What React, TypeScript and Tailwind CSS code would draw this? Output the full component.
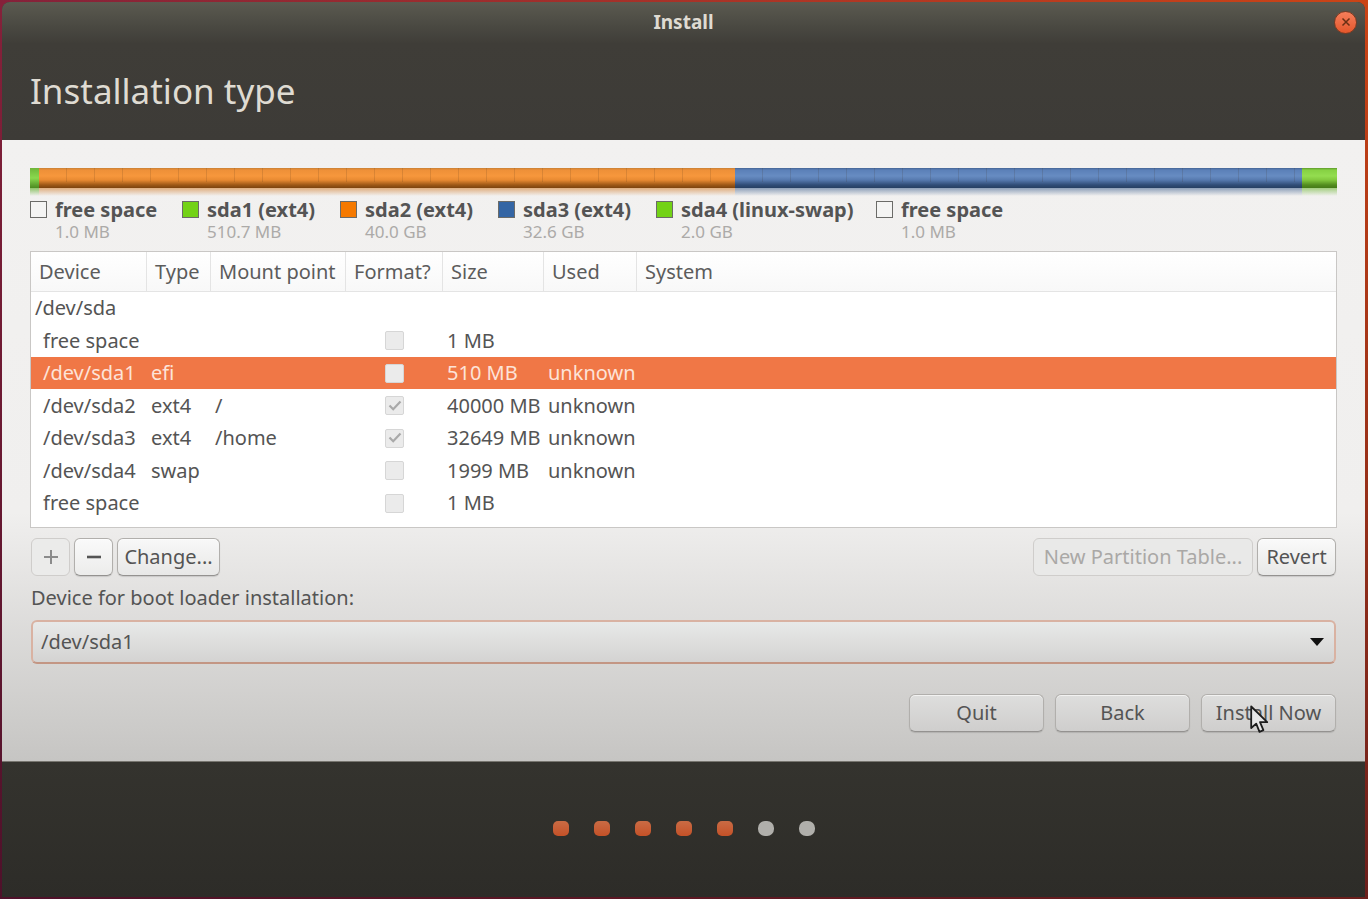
import React from "react";

type Row = {
  device: string;
  nested: boolean;
  type?: string;
  mount?: string;
  format?: boolean;
  size?: string;
  used?: string;
  selected?: boolean;
};

const rows: Row[] = [
  { device: "/dev/sda", nested: false },
  { device: "free space", nested: true, format: false, size: "1 MB" },
  { device: "/dev/sda1", nested: true, type: "efi", format: false, size: "510 MB", used: "unknown", selected: true },
  { device: "/dev/sda2", nested: true, type: "ext4", mount: "/", format: true, size: "40000 MB", used: "unknown" },
  { device: "/dev/sda3", nested: true, type: "ext4", mount: "/home", format: true, size: "32649 MB", used: "unknown" },
  { device: "/dev/sda4", nested: true, type: "swap", format: false, size: "1999 MB", used: "unknown" },
  { device: "free space", nested: true, format: false, size: "1 MB" },
];

const legend = [
  { name: "free space", size: "1.0 MB", swatch: "bg-[#f4f4f3]" },
  { name: "sda1 (ext4)", size: "510.7 MB", swatch: "bg-[#73d216]" },
  { name: "sda2 (ext4)", size: "40.0 GB", swatch: "bg-[#f57900]" },
  { name: "sda3 (ext4)", size: "32.6 GB", swatch: "bg-[#3465a4]" },
  { name: "sda4 (linux-swap)", size: "2.0 GB", swatch: "bg-[#73d216]" },
  { name: "free space", size: "1.0 MB", swatch: "bg-[#f4f4f3]" },
];

const segments = [
  {
    grow: 9,
    fill: "bg-linear-to-b from-[#6fb63a] via-[#8ad94e] to-[#4c8a20]",
    glow: "from-[#8fc36a]",
    ticks: false,
  },
  {
    grow: 696,
    fill: "bg-[linear-gradient(to_bottom,#c88136_0,#ee9038_2px,#f7973c_8px,#e88a32_12px,#9c5716_17px,#7c430e_100%)]",
    glow: "from-[#dfae80]",
    ticks: true,
  },
  {
    grow: 567,
    fill: "bg-[linear-gradient(to_bottom,#456594_0,#5b80b8_2px,#678cc2_8px,#5679ae_12px,#304c76_17px,#263f62_100%)]",
    glow: "from-[#8d9fb8]",
    ticks: true,
  },
  {
    grow: 35,
    fill: "bg-[linear-gradient(to_bottom,#5f9a2b_0,#86d143_2px,#94dd50_8px,#82c83e_12px,#528c1e_17px,#457a18_100%)]",
    glow: "from-[#a3cd80]",
    ticks: false,
  },
];

const raised =
  "rounded-md border border-[#b1afac] border-b-[#949290] bg-linear-to-b shadow-[inset_0_1px_0_rgba(255,255,255,0.6),0_1px_1px_rgba(0,0,0,0.12)]";

function UsageBar() {
  return (
    <div className="flex" role="img" aria-label="Disk usage">
      {segments.map((s, i) => (
        <div key={i} className="basis-0" style={{ flexGrow: s.grow }}>
          <div className={`h-5 ${s.fill}`}>
            {s.ticks && (
              <div className="h-3.5 bg-[repeating-linear-gradient(to_right,transparent_0,transparent_27px,rgba(60,40,20,0.14)_27px,rgba(60,40,20,0.14)_28px)]" />
            )}
          </div>
          <div className={`h-2 bg-linear-to-b to-transparent ${s.glow}`} />
        </div>
      ))}
    </div>
  );
}

function PartitionTable() {
  const head = "border-r border-[#e4e4e4] px-2 font-normal text-left";
  return (
    <div className="h-[277px] border border-[#c9c7c5] bg-white">
      <table className="w-full table-fixed border-separate border-spacing-0 whitespace-nowrap">
        <colgroup>
          <col className="w-[116px]" />
          <col className="w-16" />
          <col className="w-[135px]" />
          <col className="w-[97px]" />
          <col className="w-[101px]" />
          <col className="w-[93px]" />
          <col />
        </colgroup>
        <thead>
          <tr className="h-10 bg-linear-to-b from-white to-[#f8f8f8] text-[#5c5c5c] *:border-b">
            <th className={head}>Device</th>
            <th className={head}>Type</th>
            <th className={head}>Mount point</th>
            <th className={head}>Format?</th>
            <th className={head}>Size</th>
            <th className={head}>Used</th>
            <th className="border-[#e4e4e4] px-2 text-left font-normal">System</th>
          </tr>
        </thead>
        <tbody>
          {rows.map((r, i) => (
            <tr key={i} className={`h-8 even:h-[33px] ${r.selected ? "bg-[#f07746] text-[#fde3d8]" : ""}`}>
              <td className={r.nested ? "pl-3" : "pl-1"}>{r.device}</td>
              <td className="pl-1">{r.type}</td>
              <td className="pl-1">{r.mount}</td>
              <td>
                {r.format !== undefined && (
                  <span className="grid place-items-center">
                    <input
                      type="checkbox"
                      disabled
                      checked={r.format}
                      readOnly
                      aria-label={`Format ${r.device}`}
                      className="col-start-1 row-start-1 size-[19px] appearance-none rounded-xs border border-[#d6d6d6] bg-[#ebebeb]"
                    />
                    {r.format && (
                      <svg viewBox="0 0 14 12" className="col-start-1 row-start-1 h-3 w-3.5" aria-hidden="true">
                        <path d="M1.5 5.5 5.2 9.2 12.5 1.5" fill="none" stroke="#a9a9a9" strokeWidth="2.2" />
                      </svg>
                    )}
                  </span>
                )}
              </td>
              <td className="pl-1">{r.size}</td>
              <td className="pl-1">{r.used}</td>
              <td />
            </tr>
          ))}
        </tbody>
      </table>
    </div>
  );
}

export default function App() {
  const action = `${raised} relative h-[38px] w-[135px] from-[#dededd] to-[#cfcecd]`;
  return (
    <div className="flex min-h-screen bg-[linear-gradient(to_bottom,transparent,#2b062099),linear-gradient(to_right,#85213a,#cb4416)] py-0.5 pr-[3px] pl-0.5 font-['Noto_Sans','Open_Sans',sans-serif] text-[20px] leading-6 text-[#545454]">
      <div className="flex flex-1 flex-col overflow-hidden rounded-t-lg bg-[#3d3b37]">
        <header className="bg-[linear-gradient(to_bottom,#5b5a50_0,#4a4942_24px,#3f3d38_42px,#3d3b37_100%)] text-[#dfdbd2]">
          <div className="relative flex h-10 items-center justify-center text-[19px] font-bold">
            <span>Install</span>
            <button
              type="button"
              aria-label="Close"
              className="absolute right-2 grid size-[23px] place-items-center rounded-full border border-[#7a3a22] bg-linear-to-b from-[#f57e5a] to-[#e4562a]"
            >
              <svg viewBox="0 0 10 10" className="size-2.5" aria-hidden="true">
                <path d="M1.5 1.5 8.5 8.5M8.5 1.5 1.5 8.5" stroke="#6b2f14" strokeWidth="1.5" fill="none" />
              </svg>
            </button>
          </div>
          <h1 className="flex h-[98px] items-center px-7 text-[35px] leading-10">
            Installation type
          </h1>
        </header>

        <main className="bg-[linear-gradient(to_bottom,#f2f1f0_0,#f0efee_60%,#c6c5c3_100%)] px-7 pt-7 pb-[29px]">
          <UsageBar />
          <ul className="mt-0.5 grid grid-cols-[152px_158px_158px_158px_220px_auto] whitespace-nowrap">
            {legend.map((l, i) => (
              <li key={i} className="flex gap-2">
                <span className={`mt-[3px] size-[17px] border border-[#6b6b68] ${l.swatch}`} />
                <span className="flex flex-col">
                  <span className="text-[20px] font-bold">{l.name}</span>
                  <span className="text-[17px] leading-5 text-[#acaaa8]">{l.size}</span>
                </span>
              </li>
            ))}
          </ul>

          <div className="mt-[9px]">
            <PartitionTable />
          </div>

          <div className="px-px">
            <div className="mt-2.5 flex gap-1">
              <button
                type="button"
                disabled
                aria-label="Add partition"
                className="grid h-[38px] w-[39px] place-items-center rounded-md border border-[#cfcdcb] bg-[#ebebea] text-[#8b8b8b]"
              >
                <svg viewBox="0 0 16 16" className="size-4" aria-hidden="true">
                  <path d="M1 8H15M8 1V15" stroke="currentColor" strokeWidth="2" />
                </svg>
              </button>
              <button
                type="button"
                aria-label="Remove partition"
                className={`${raised} grid h-[38px] w-[39px] place-items-center from-[#fafafa] to-[#ececeb]`}
              >
                <svg viewBox="0 0 16 16" className="size-4" aria-hidden="true">
                  <path d="M1 8H15" stroke="currentColor" strokeWidth="2.6" />
                </svg>
              </button>
              <button type="button" className={`${raised} h-[38px] w-[103px] from-[#f8f8f8] to-[#e8e8e7]`}>
                Change...
              </button>
              <button
                type="button"
                disabled
                className="ml-auto h-[38px] w-[220px] rounded-md border border-[#cfcdcb] bg-[#e9e9e8] text-[#aaa8a6]"
              >
                New Partition Table...
              </button>
              <button type="button" className={`${raised} h-[38px] w-[79px] from-[#fafafa] to-[#e8e8e7]`}>
                Revert
              </button>
            </div>

            <label htmlFor="boot-device" className="mt-2.5 block">
              Device for boot loader installation:
            </label>
            <div className="mt-2.5 grid items-center">
              <select
                id="boot-device"
                defaultValue="/dev/sda1"
                className="col-start-1 row-start-1 h-11 w-full appearance-none rounded-md border-2 border-[#d9b2a2] border-b-[#c39684] bg-linear-to-b from-[#e8e9e8] to-[#d4d3d2] px-2"
              >
                <option>/dev/sda1</option>
              </select>
              <svg viewBox="0 0 14 8" className="pointer-events-none col-start-1 row-start-1 mr-3 h-2 w-3.5 justify-self-end" aria-hidden="true">
                <path d="M0 0H14L7 8Z" fill="#111" />
              </svg>
            </div>

            <div className="mt-[30px] flex justify-end gap-[11px]">
              <button type="button" className={action}>Quit</button>
              <button type="button" className={action}>Back</button>
              <button type="button" className={action}>
                Install Now
                <svg viewBox="0 0 19 29" className="absolute top-2.5 left-12 h-[29px] w-[19px]" aria-hidden="true">
                  <path
                    d="M1.2 1.5V23L6.2 18.6 9.5 26.8 13.4 25.2 10 17.2H17.2Z"
                    fill="#e6e6e6"
                    stroke="#1c1c1c"
                    strokeWidth="1.8"
                    strokeLinejoin="round"
                  />
                </svg>
              </button>
            </div>
          </div>
        </main>

        <footer className="flex flex-1 items-center justify-center gap-[25px] border-t border-[#77756f] bg-linear-to-b from-[#34332e] to-[#2d2c28] pb-0.5">
          {[0, 1, 2, 3, 4, 5, 6].map((n) => (
            <span
              key={n}
              className={
                n < 5
                  ? "h-[15px] w-4 rounded-[5px] bg-linear-to-b from-[#c96b44] to-[#c45127]"
                  : "h-[15px] w-4 rounded-[7px] bg-[#b0afab]"
              }
            />
          ))}
        </footer>
      </div>
    </div>
  );
}
